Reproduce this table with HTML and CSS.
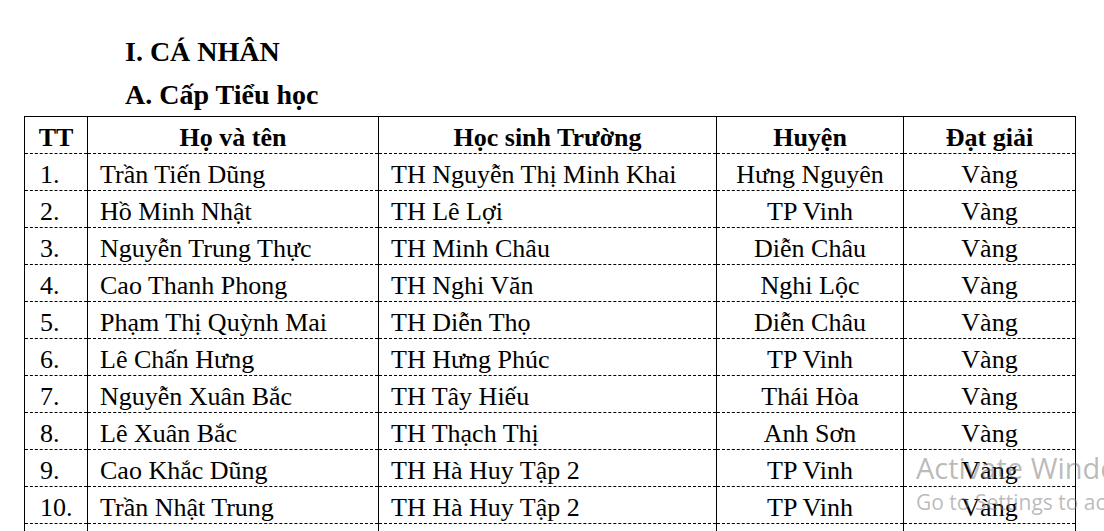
FILE: index.html
```html
<!DOCTYPE html>
<html lang="vi">
<head>
<meta charset="utf-8">
<title>Cá nhân - Cấp Tiểu học</title>
<link rel="stylesheet" href="styles.css">
</head>
<body>
<div class="page">
  <h1 class="heading">I. CÁ NHÂN</h1>
  <h2 class="heading">A. Cấp Tiểu học</h2>
  <table class="list">
    <colgroup>
      <col class="c-tt"><col class="c-name"><col class="c-school"><col class="c-district"><col class="c-prize">
    </colgroup>
    <thead>
      <tr><th>TT</th><th>Họ và tên</th><th>Học sinh Trường</th><th>Huyện</th><th>Đạt giải</th></tr>
    </thead>
    <tbody>
      <tr><td>1.</td><td>Trần Tiến Dũng</td><td>TH Nguyễn Thị Minh Khai</td><td class="mid">Hưng Nguyên</td><td class="mid">Vàng</td></tr>
      <tr><td>2.</td><td>Hồ Minh Nhật</td><td>TH Lê Lợi</td><td class="mid">TP Vinh</td><td class="mid">Vàng</td></tr>
      <tr><td>3.</td><td>Nguyễn Trung Thực</td><td>TH Minh Châu</td><td class="mid">Diễn Châu</td><td class="mid">Vàng</td></tr>
      <tr><td>4.</td><td>Cao Thanh Phong</td><td>TH Nghi Văn</td><td class="mid">Nghi Lộc</td><td class="mid">Vàng</td></tr>
      <tr><td>5.</td><td>Phạm Thị Quỳnh Mai</td><td>TH Diễn Thọ</td><td class="mid">Diễn Châu</td><td class="mid">Vàng</td></tr>
      <tr><td>6.</td><td>Lê Chấn Hưng</td><td>TH Hưng Phúc</td><td class="mid">TP Vinh</td><td class="mid">Vàng</td></tr>
      <tr><td>7.</td><td>Nguyễn Xuân Bắc</td><td>TH Tây Hiếu</td><td class="mid">Thái Hòa</td><td class="mid">Vàng</td></tr>
      <tr><td>8.</td><td>Lê Xuân Bắc</td><td>TH Thạch Thị</td><td class="mid">Anh Sơn</td><td class="mid">Vàng</td></tr>
      <tr><td>9.</td><td>Cao Khắc Dũng</td><td>TH Hà Huy Tập 2</td><td class="mid">TP Vinh</td><td class="mid">Vàng</td></tr>
      <tr><td>10.</td><td>Trần Nhật Trung</td><td>TH Hà Huy Tập 2</td><td class="mid">TP Vinh</td><td class="mid">Vàng</td></tr>
      <tr><td>&nbsp;</td><td></td><td></td><td></td><td></td></tr>
    </tbody>
  </table>
</div>
<div class="watermark">
  <div class="wm-title">Activate Windows</div>
  <div class="wm-sub">Go to Settings to activate Windows.</div>
</div>
</body>
</html>
```

FILE: styles.css
```css
html, body {
  margin: 0;
  padding: 0;
  background: #ffffff;
  height: 531px;
  overflow: hidden;
}

body {
  font-family: "Liberation Serif", "Times New Roman", serif;
  color: #000;
  position: relative;
}

.page {
  padding-top: 30px;
}

.heading {
  margin: 0;
  padding-left: 125px;
  font-size: 28px;
  font-weight: bold;
  line-height: 43px;
}

.list {
  margin-left: 24px;
  border-collapse: collapse;
  table-layout: fixed;
  width: 1051px;
  font-size: 26px;
}

.c-tt { width: 63px; }
.c-name { width: 291px; }
.c-school { width: 338px; }
.c-district { width: 187px; }
.c-prize { width: 172px; }

.list th,
.list td {
  border-left: 1px solid #000;
  border-right: 1px solid #000;
  border-bottom: 1px dashed #000;
  padding: 6px 0 0 12px;
  height: 30px;
  line-height: 30px;
  text-align: left;
  white-space: nowrap;
  vertical-align: top;
}

.list th {
  border-top: 1px solid #000;
  text-align: center;
  padding-left: 0;
  font-weight: bold;
}

.list td:first-child {
  padding-left: 15px;
}

.list td.mid {
  text-align: center;
  padding-left: 0;
}

.watermark {
  position: absolute;
  left: 916px;
  top: 451px;
  white-space: nowrap;
  font-family: "Open Sans", "Noto Sans", sans-serif;
  color: rgba(120, 120, 120, 0.5);
  pointer-events: none;
}

.wm-title {
  font-size: 29px;
  line-height: 34px;
}

.wm-sub {
  font-size: 21px;
  line-height: 30px;
  margin-top: 2px;
}
```
